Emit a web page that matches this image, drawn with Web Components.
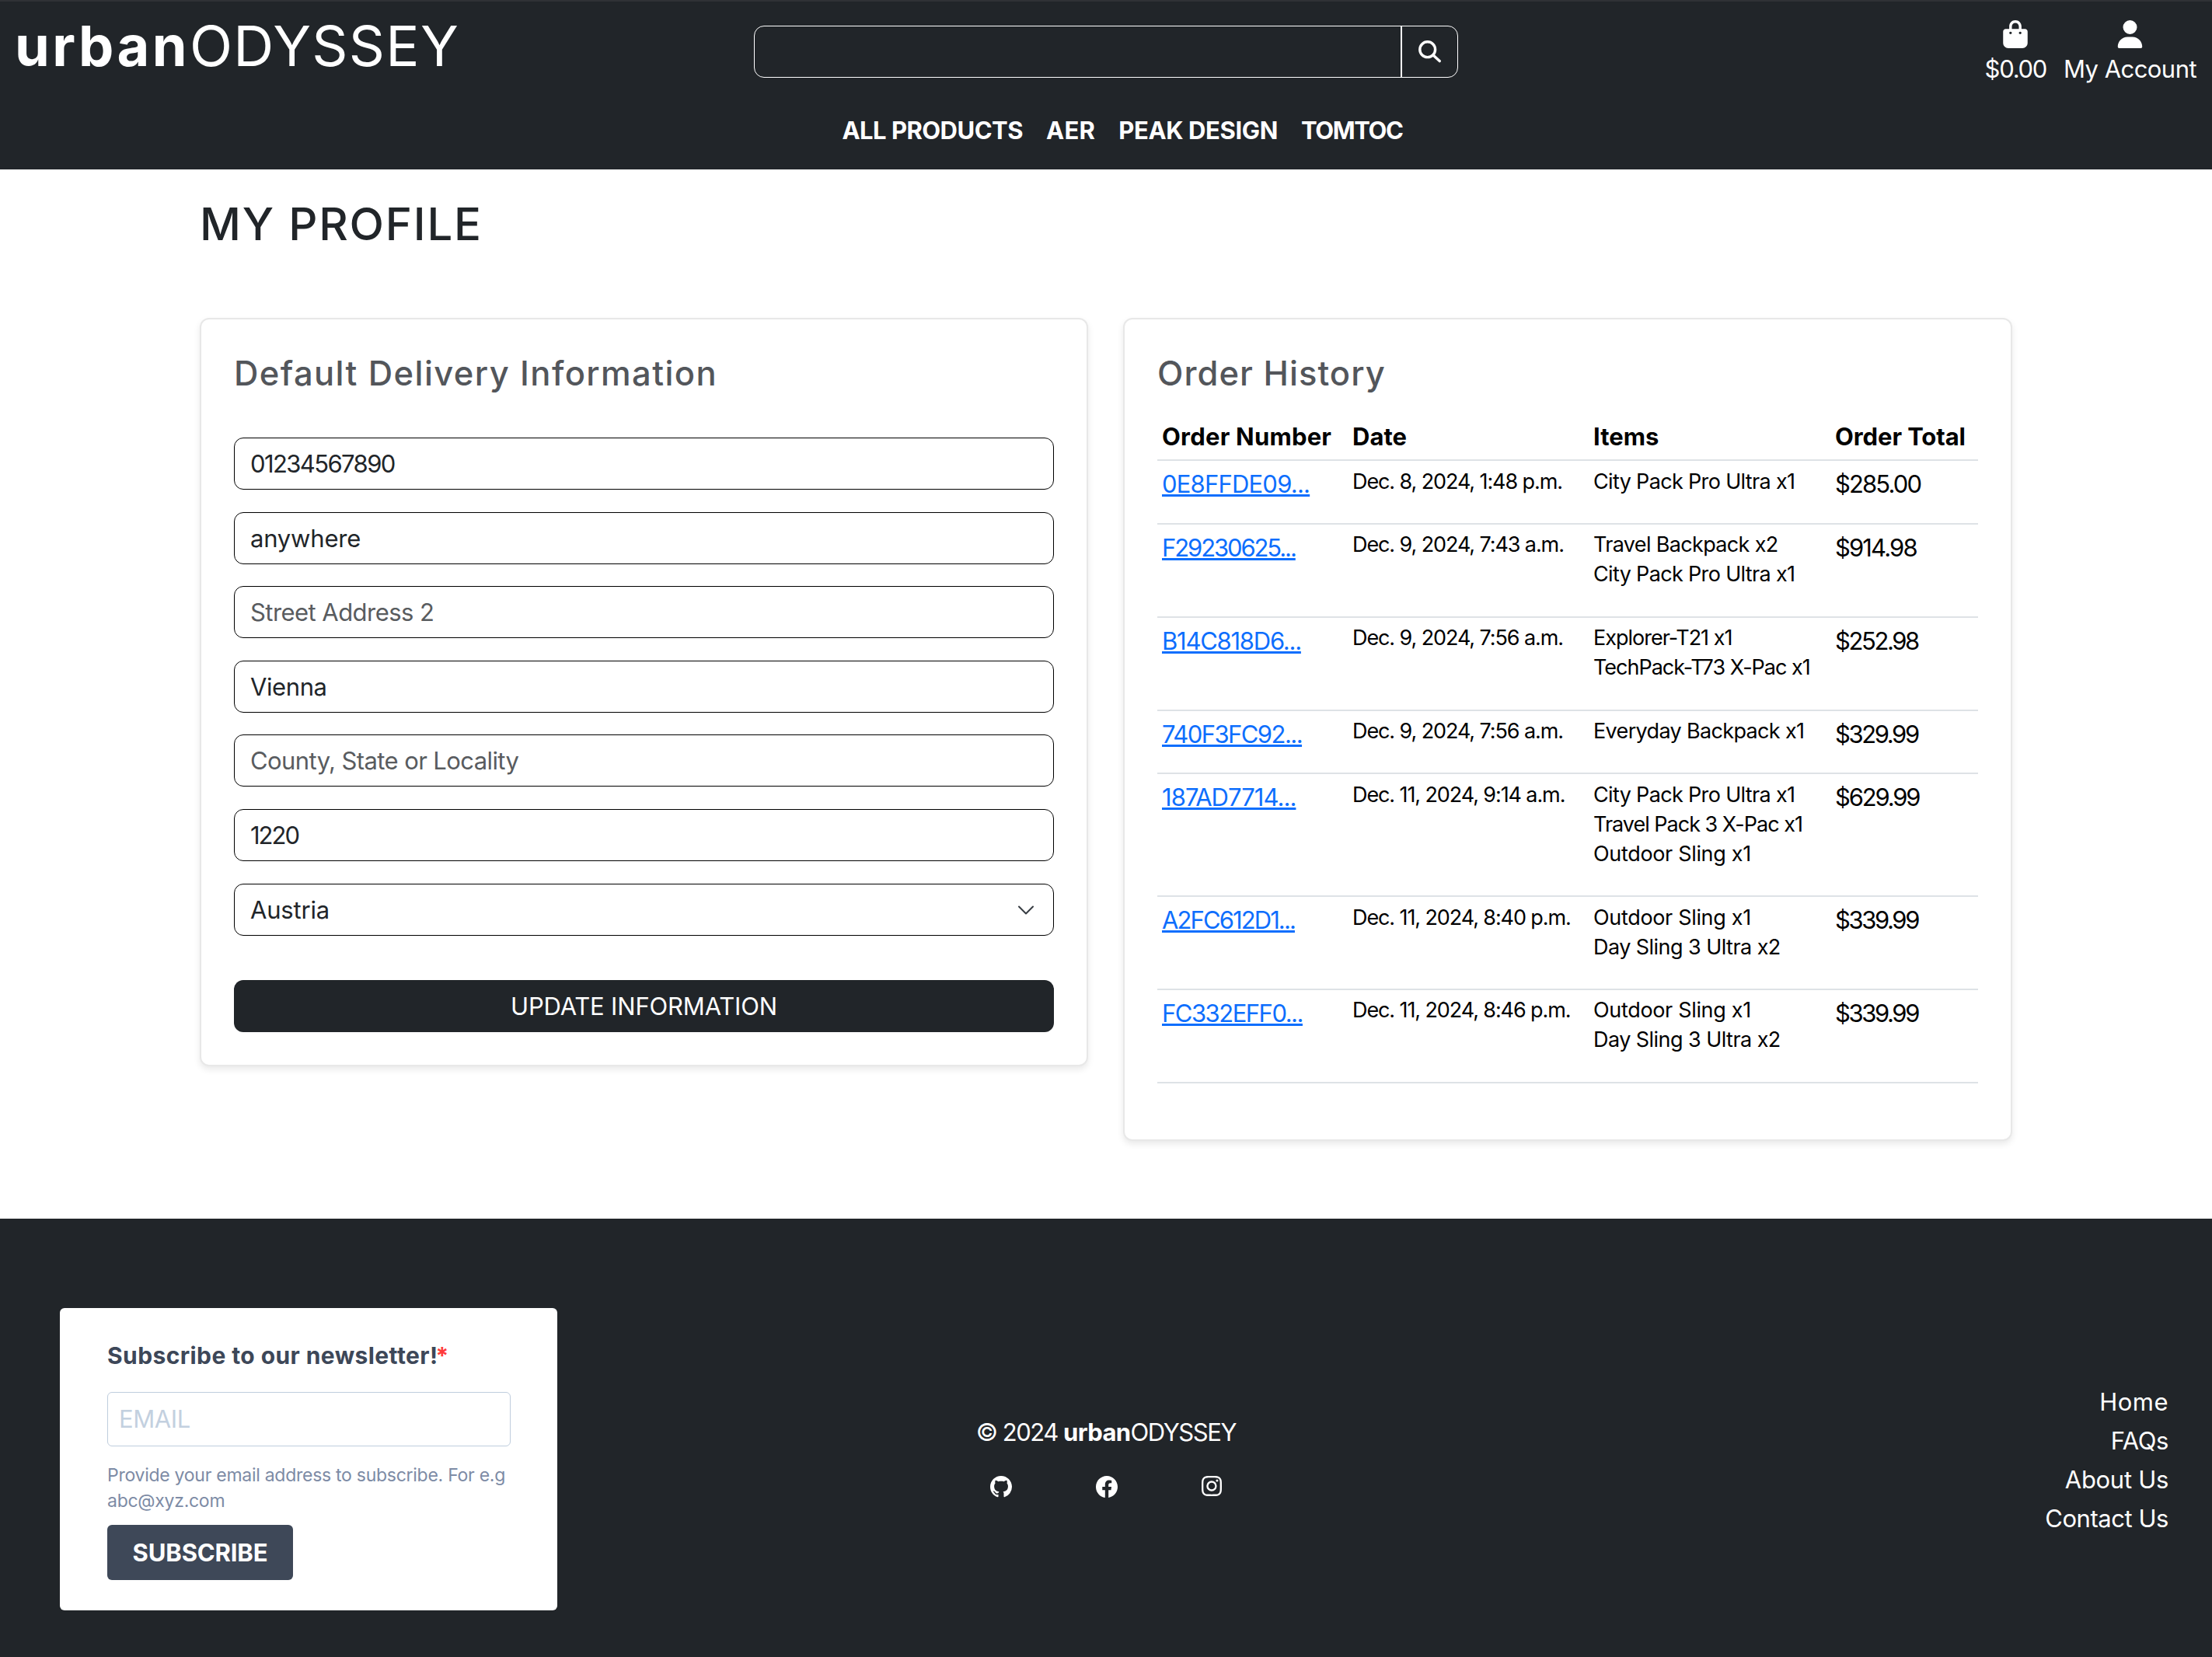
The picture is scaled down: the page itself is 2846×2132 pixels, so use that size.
<!doctype html>
<html lang="en">
<head>
<meta charset="utf-8">
<title>My Profile - urbanODYSSEY</title>
<style>
  html, body { margin: 0; background: #fff; }
  body { font-family: Inter, "Liberation Sans", sans-serif; font-size: 31px; color: #212529; }
</style>
</head>
<body>
<uo-header></uo-header>
<uo-profile></uo-profile>
<uo-footer></uo-footer>

<script>
// icons, from the bootstrap / font awesome sets used by the site
const ICONS = {
  bag: ['0 0 448 512', 'M160 112c0-35.3 28.7-64 64-64s64 28.7 64 64v48H160V112zm-48 48H48c-26.5 0-48 21.5-48 48V416c0 53 43 96 96 96H352c53 0 96-43 96-96V208c0-26.5-21.5-48-48-48H336V112C336 50.1 285.9 0 224 0S112 50.1 112 112v48zm24 48a24 24 0 1 1 0 48 24 24 0 1 1 0-48zm152 24a24 24 0 1 1 48 0 24 24 0 1 1 -48 0z'],
  user: ['0 0 448 512', 'M224 256A128 128 0 1 0 224 0a128 128 0 1 0 0 256zm-45.7 48C79.8 304 0 383.8 0 482.3C0 498.7 13.3 512 29.7 512H418.3c16.4 0 29.7-13.3 29.7-29.7C448 383.8 368.2 304 269.7 304H178.3z'],
  github: ['0 0 16 16', 'M8 0C3.58 0 0 3.58 0 8c0 3.54 2.29 6.53 5.47 7.59.4.07.55-.17.55-.38 0-.19-.01-.82-.01-1.49-2.01.37-2.53-.49-2.69-.94-.09-.23-.48-.94-.82-1.13-.28-.15-.68-.52-.01-.53.63-.01 1.08.58 1.23.82.72 1.21 1.87.87 2.33.66.07-.52.28-.87.51-1.07-1.78-.2-3.64-.89-3.64-3.95 0-.87.31-1.59.82-2.15-.08-.2-.36-1.02.08-2.12 0 0 .67-.21 2.2.82.64-.18 1.32-.27 2-.27s1.36.09 2 .27c1.53-1.04 2.2-.82 2.2-.82.44 1.1.16 1.92.08 2.12.51.56.82 1.27.82 2.15 0 3.07-1.87 3.75-3.65 3.95.29.25.54.73.54 1.48 0 1.07-.01 1.93-.01 2.2 0 .21.15.46.55.38A8.01 8.01 0 0 0 16 8c0-4.42-3.58-8-8-8'],
  facebook: ['0 0 16 16', 'M16 8.049c0-4.446-3.582-8.05-8-8.05C3.58 0-.002 3.603-.002 8.05c0 4.017 2.926 7.347 6.75 7.951v-5.625h-2.03V8.05H6.75V6.275c0-2.017 1.195-3.131 3.022-3.131.876 0 1.791.157 1.791.157v1.98h-1.009c-.993 0-1.303.621-1.303 1.258v1.51h2.218l-.354 2.326H9.25V16c3.824-.604 6.75-3.934 6.75-7.951'],
  instagram: ['0 0 16 16', 'M8 0C5.829 0 5.556.01 4.703.048 3.85.088 3.269.222 2.76.42a3.9 3.9 0 0 0-1.417.923A3.9 3.9 0 0 0 .42 2.76C.222 3.268.087 3.85.048 4.7.01 5.555 0 5.827 0 8.001c0 2.172.01 2.444.048 3.297.04.852.174 1.433.372 1.942.205.526.478.972.923 1.417.444.445.89.719 1.416.923.51.198 1.09.333 1.942.372C5.555 15.99 5.827 16 8 16s2.444-.01 3.298-.048c.851-.04 1.434-.174 1.943-.372a3.9 3.9 0 0 0 1.416-.923c.445-.445.718-.891.923-1.417.197-.509.332-1.09.372-1.942C15.99 10.445 16 10.173 16 8s-.01-2.445-.048-3.299c-.04-.851-.175-1.433-.372-1.941a3.9 3.9 0 0 0-.923-1.417A3.9 3.9 0 0 0 13.24.42c-.51-.198-1.092-.333-1.943-.372C10.443.01 10.172 0 7.998 0zm-.717 1.442h.718c2.136 0 2.389.007 3.232.046.78.035 1.204.166 1.486.275.373.145.64.319.92.599s.453.546.598.92c.11.281.24.705.275 1.485.039.843.047 1.096.047 3.231s-.008 2.389-.047 3.232c-.035.78-.166 1.203-.275 1.485a2.5 2.5 0 0 1-.599.919c-.28.28-.546.453-.92.598-.28.11-.704.24-1.485.276-.843.038-1.096.047-3.232.047s-2.39-.009-3.233-.047c-.78-.036-1.203-.166-1.485-.276a2.5 2.5 0 0 1-.92-.598 2.5 2.5 0 0 1-.6-.92c-.109-.281-.24-.705-.275-1.485-.038-.843-.046-1.096-.046-3.233s.008-2.388.046-3.231c.036-.78.166-1.204.276-1.486.145-.373.319-.64.599-.92s.546-.453.92-.598c.282-.11.705-.24 1.485-.276.738-.034 1.024-.044 2.515-.045zm4.988 1.328a.96.96 0 1 0 0 1.92.96.96 0 0 0 0-1.92m-4.27 1.122a4.109 4.109 0 1 0 0 8.217 4.109 4.109 0 0 0 0-8.217m0 1.441a2.667 2.667 0 1 1 0 5.334 2.667 2.667 0 0 1 0-5.334']
};

function icon(name, w, h) {
  const [box, d] = ICONS[name];
  return `<svg xmlns="http://www.w3.org/2000/svg" width="${w}" height="${h}" viewBox="${box}" fill="currentColor" style="display:block"><path d="${d}"/></svg>`;
}

class UoHeader extends HTMLElement {
  constructor() {
    super();
    this.attachShadow({ mode: "open" });
    this.shadowRoot.innerHTML = `
      <style>
        :host { display: block; background: #212529; color: #fff; border-top: 2px solid #2f3135; box-sizing: border-box; height: 218px; }
        .top { display: grid; grid-template-columns: 1fr 906px 1fr; align-items: start; height: 126px; }
        .logo { font-size: 72px; line-height: 72px; padding: 21px 0 0 19px; white-space: nowrap; }
        .logo b { font-weight: 700; letter-spacing: 3.4px; }
        .logo span { font-weight: 400; letter-spacing: 1.3px; }
        .search { display: flex; height: 67px; margin-top: 31px; border: 1px solid #fff; border-radius: 13px; box-sizing: border-box; }
        .search input { flex: 1; min-width: 0; background: transparent; border: 0; outline: 0; color: #fff; }
        .search button { width: 73px; background: transparent; border: 0; border-left: 2px solid #fff; color: #fff; padding: 0; display: flex; align-items: center; justify-content: center; }
        .account { display: flex; justify-content: flex-end; gap: 22px; padding: 24px 20px 0 0; }
        .account a { display: flex; flex-direction: column; align-items: center; color: #fff; text-decoration: none; line-height: 44px; }
        .account svg { margin-bottom: 5px; }
        .cart { letter-spacing: -1.3px; }
        .acc { letter-spacing: -.55px; }
        nav { display: flex; justify-content: center; gap: 30px; padding-left: 42px; font-weight: 700; line-height: 44px; margin-top: 18px; }
        nav a { color: #fff; text-decoration: none; }
      </style>
      <div class="top">
        <div class="logo"><b>urban</b><span>ODYSSEY</span></div>
        <form class="search"><input type="text" aria-label="Search"><button type="button" aria-label="Search">
          <svg xmlns="http://www.w3.org/2000/svg" width="29" height="29" viewBox="0 0 29 29" fill="none" stroke="currentColor" stroke-width="3.4" stroke-linecap="round"><circle cx="11.7" cy="11.7" r="9.9"/><path d="M19 19l8.2 7.6"/></svg>
        </button></form>
        <div class="account">
          <a href="#" class="cart">${icon("bag", 32, 36)}$0.00</a>
          <a href="#" class="acc">${icon("user", 33, 36)}My Account</a>
        </div>
      </div>
      <nav>
        <a href="#" style="letter-spacing:-.53px">ALL PRODUCTS</a>
        <a href="#" style="letter-spacing:.33px">AER</a>
        <a href="#" style="letter-spacing:-.38px">PEAK DESIGN</a>
        <a href="#" style="letter-spacing:-1.4px">TOMTOC</a>
      </nav>`;
  }
}
customElements.define("uo-header", UoHeader);

class UoPanel extends HTMLElement {
  constructor() {
    super();
    this.attachShadow({ mode: "open" });
    this.shadowRoot.innerHTML = `
      <style>
        :host { display: block; background: #fff; border: 2px solid rgba(0,0,0,.09); border-radius: 12px; box-shadow: 0 4px 8px rgba(0,0,0,.09); padding: 42px; box-sizing: border-box; }
        h2 { margin: 0; font-size: 43.5px; line-height: 54px; font-weight: 500; color: #53565b; }
      </style>
      <h2 part="title"></h2>
      <slot></slot>`;
    this.shadowRoot.querySelector("h2").textContent = this.getAttribute("heading");
    this.shadowRoot.querySelector("h2").style.letterSpacing = this.getAttribute("spacing");
  }
}
customElements.define("uo-panel", UoPanel);

class UoField extends HTMLElement {
  constructor() {
    super();
    this.attachShadow({ mode: "open" });
    const tag = this.getAttribute("placeholder") ? "placeholder" : "value";
    this.shadowRoot.innerHTML = `
      <style>
        :host { display: block; margin-bottom: 28.6px; }
        input { display: block; width: 100%; height: 67px; box-sizing: border-box; padding: 0 20px; border: 1px solid #000; border-radius: 12px; font: 400 31px Inter, sans-serif; color: #212529; outline: 0; background: #fff; }
        input::placeholder { color: #595c5f; opacity: 1; }
      </style>
      <input type="text">`;
    const input = this.shadowRoot.querySelector("input");
    input.setAttribute(tag, this.getAttribute(tag));
    input.style.letterSpacing = this.getAttribute("spacing");
  }
}
customElements.define("uo-field", UoField);

class UoSelect extends HTMLElement {
  constructor() {
    super();
    this.attachShadow({ mode: "open" });
    this.shadowRoot.innerHTML = `
      <style>
        :host { display: block; position: relative; }
        select { display: block; width: 100%; height: 67px; box-sizing: border-box; padding: 0 20px; border: 1px solid #000; border-radius: 12px; font: 400 31px Inter, sans-serif; color: #212529; background: #fff; appearance: none; outline: 0; letter-spacing: -.2px; }
        svg { position: absolute; right: 20px; top: 22px; pointer-events: none; }
      </style>
      <select><option>Austria</option></select>
      <svg width="32" height="24" viewBox="0 0 16 12" fill="none" stroke="#343a40" stroke-width="1" stroke-linecap="round" stroke-linejoin="round"><path d="m3.5 3.75 4.5 4.5 4.5-4.5"/></svg>`;
  }
}
customElements.define("uo-select", UoSelect);

const NARROW = -1, WIDE = -.33;
const ORDERS = [
  ["0E8FFDE09...", -.8, "Dec. 8, 2024, 1:48 p.m.", [["City Pack Pro Ultra x1"]], "$285.00", -1.87],
  ["F29230625...", -2.1, "Dec. 9, 2024, 7:43 a.m.", [["Travel Backpack x2"], ["City Pack Pro Ultra x1"]], "$914.98", -1.87],
  ["B14C818D6...", -1.25, "Dec. 9, 2024, 7:56 a.m.", [["Explorer-T21 x1", NARROW], ["TechPack-T73 X-Pac x1", NARROW]], "$252.98", -2.4],
  ["740F3FC92...", -1.55, "Dec. 9, 2024, 7:56 a.m.", [["Everyday Backpack x1"]], "$329.99", -2.4],
  ["187AD7714...", -.95, "Dec. 11, 2024, 9:14 a.m.", [["City Pack Pro Ultra x1"], ["Travel Pack 3 X-Pac x1", NARROW], ["Outdoor Sling x1", WIDE]], "$629.99", -2.2],
  ["A2FC612D1...", -1.9, "Dec. 11, 2024, 8:40 p.m.", [["Outdoor Sling x1", WIDE], ["Day Sling 3 Ultra x2", -.55]], "$339.99", -2.4],
  ["FC332EFF0...", -1.5, "Dec. 11, 2024, 8:46 p.m.", [["Outdoor Sling x1", WIDE], ["Day Sling 3 Ultra x2", -.55]], "$339.99", -2.4]
];

class UoOrders extends HTMLElement {
  constructor() {
    super();
    this.attachShadow({ mode: "open" });
    const rows = ORDERS.map(([id, sp, date, items, total, tsp]) => `
      <tr>
        <td class="big"><a href="#" style="letter-spacing:${sp}px">${id}</a></td>
        <td class="date">${date}</td>
        <td>${items.map(([name, s = -.66]) => `<span style="letter-spacing:${s}px">${name}</span>`).join("<br>")}</td>
        <td class="big" style="letter-spacing:${tsp}px">${total}</td>
      </tr>`).join("");
    this.shadowRoot.innerHTML = `
      <style>
        :host { display: block; margin: 28px 0 30px; color: #000; }
        table { width: 100%; border-collapse: collapse; table-layout: fixed; }
        th { text-align: left; font-size: 31px; font-weight: 700; line-height: 54px; padding: 0 0 2px 6px; border-bottom: 2px solid #dee2e6; white-space: nowrap; }
        td { vertical-align: top; padding: 7.5px 0 34.5px 6px; border-bottom: 2px solid #dee2e6; font-size: 27px; line-height: 37.9px; white-space: nowrap; }
        td.big { font-size: 31px; line-height: 44px; padding-top: 8px; padding-bottom: 27.5px; }
        .date { letter-spacing: -1.1px; }
        a { color: #0d6efd; }
      </style>
      <table>
        <colgroup><col style="width:245px"><col style="width:310px"><col style="width:311px"><col></colgroup>
        <thead><tr>
          <th style="letter-spacing:.22px">Order Number</th><th>Date</th><th>Items</th><th style="letter-spacing:-.09px">Order Total</th>
        </tr></thead>
        <tbody>${rows}</tbody>
      </table>`;
  }
}
customElements.define("uo-orders", UoOrders);

class UoProfile extends HTMLElement {
  constructor() {
    super();
    this.attachShadow({ mode: "open" });
    this.shadowRoot.innerHTML = `
      <style>
        :host { display: block; padding: 0 257px 100px; }
        h1 { margin: 0; height: 191px; box-sizing: border-box; padding-top: 38px; font-size: 58px; line-height: 64px; font-weight: 500; letter-spacing: 1.8px; color: #212529; }
        .cols { display: grid; grid-template-columns: 1143px 1144px; gap: 45px; align-items: start; }
        form { margin-top: 56px; }
        button { display: block; width: 100%; height: 67px; margin-top: 57px; border: 0; border-radius: 12px; background: #212529; color: #fff; font: 400 31px Inter, sans-serif; letter-spacing: -.18px; padding: 0; }
      </style>
      <h1>MY PROFILE</h1>
      <div class="cols">
        <uo-panel heading="Default Delivery Information" spacing="1.4px">
          <form>
            <uo-field value="01234567890" spacing="-1.6px"></uo-field>
            <uo-field value="anywhere" spacing="-.2px"></uo-field>
            <uo-field placeholder="Street Address 2" spacing="-.55px"></uo-field>
            <uo-field value="Vienna" spacing="-.4px"></uo-field>
            <uo-field placeholder="County, State or Locality" spacing="-.6px"></uo-field>
            <uo-field value="1220" spacing="-2px"></uo-field>
            <uo-select></uo-select>
            <button type="button">UPDATE INFORMATION</button>
          </form>
        </uo-panel>
        <uo-panel heading="Order History" spacing="1.05px">
          <uo-orders></uo-orders>
        </uo-panel>
      </div>`;
  }
}
customElements.define("uo-profile", UoProfile);

class UoNewsletter extends HTMLElement {
  constructor() {
    super();
    this.attachShadow({ mode: "open" });
    this.shadowRoot.innerHTML = `
      <style>
        :host { display: block; width: 640px; height: 389px; box-sizing: border-box; background: #fff; border-radius: 6px; padding: 40px 60px 0 61px; color: #3d4758; }
        h3 { margin: 0; font-size: 30px; line-height: 42px; font-weight: 700; letter-spacing: .41px; white-space: nowrap; }
        h3 span { color: #ff3b3b; margin-left: -3px; }
        input { display: block; width: 100%; height: 70px; box-sizing: border-box; margin-top: 26px; padding: 0 14px; border: 1px solid #bfcddd; border-radius: 6px; font: 400 31px Inter, sans-serif; letter-spacing: -.4px; outline: 0; }
        input::placeholder { color: #c3d0df; opacity: 1; }
        p { margin: 21.5px 0 13.5px; font-size: 23px; line-height: 33px; letter-spacing: -.27px; color: #7d8ba5; }
        button { display: block; width: 239px; height: 71px; border: 0; border-radius: 6px; background: #3e4858; color: #fff; font: 700 31px Inter, sans-serif; letter-spacing: -.14px; padding: 0; }
      </style>
      <h3>Subscribe to our newsletter!<span>*</span></h3>
      <input type="email" placeholder="EMAIL">
      <p>Provide your email address to subscribe. For e.g abc@xyz.com</p>
      <button type="button">SUBSCRIBE</button>`;
  }
}
customElements.define("uo-newsletter", UoNewsletter);

class UoFooter extends HTMLElement {
  constructor() {
    super();
    this.attachShadow({ mode: "open" });
    this.shadowRoot.innerHTML = `
      <style>
        :host { display: grid; grid-template-columns: 1fr 1fr 1fr; align-items: center; background: #212529; color: #fff; padding: 115px 0 60px; height: 564px; box-sizing: border-box; }
        uo-newsletter { justify-self: start; margin-left: 77px; }
        .mid { display: flex; flex-direction: column; align-items: center; padding-bottom: 7px; }
        .copy { line-height: 44px; white-space: nowrap; letter-spacing: -1.5px; }
        .copy b { letter-spacing: -.6px; }
        .copy span { letter-spacing: -1.4px; }
        .social { display: flex; gap: 108px; margin-top: 34px; }
        .social a { color: #fff; display: block; }
        .links { justify-self: end; margin: 3px 56px 0 0; text-align: right; line-height: 50px; }
        .links a { display: block; color: #fff; text-decoration: none; }
      </style>
      <uo-newsletter></uo-newsletter>
      <div class="mid">
        <div class="copy">© 2024 <b>urban</b><span>ODYSSEY</span></div>
        <div class="social">
          <a href="#" aria-label="GitHub">${icon("github", 28, 28)}</a>
          <a href="#" aria-label="Facebook">${icon("facebook", 28, 28)}</a>
          <a href="#" aria-label="Instagram">${icon("instagram", 26, 26)}</a>
        </div>
      </div>
      <div class="links">
        <a href="#" style="letter-spacing:.5px">Home</a>
        <a href="#" style="letter-spacing:-.4px">FAQs</a>
        <a href="#" style="letter-spacing:-.3px">About Us</a>
        <a href="#" style="letter-spacing:-.45px">Contact Us</a>
      </div>`;
  }
}
customElements.define("uo-footer", UoFooter);
</script>
</body>
</html>
